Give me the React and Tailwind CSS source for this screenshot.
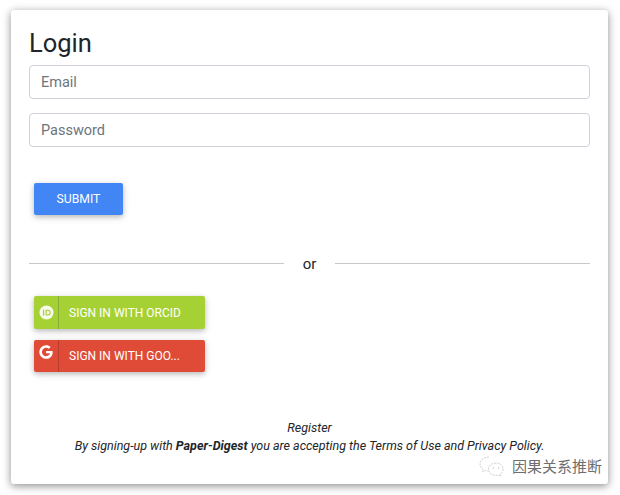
import React from 'react';

function OrcidIcon() {
  return (
    <svg width="15" height="15" viewBox="0 0 16 16">
      <circle cx="8" cy="8" r="7.5" fill="#fff" fillOpacity="0.9" />
      <rect x="4.2" y="5" width="1.3" height="6.2" fill="#a6ce39" />
      <path d="M7 5h2.4a3.1 3.1 0 0 1 0 6.2H7z M8.2 6.1v4h1.1a2 2 0 0 0 0-4z" fill="#a6ce39" fillRule="evenodd" />
    </svg>
  );
}

function GoogleIcon() {
  return (
    <svg width="14" height="14" viewBox="0 0 488 512" fill="#fff">
      <path d="M488 261.8C488 403.3 391.1 504 248 504 110.8 504 0 393.2 0 256S110.8 8 248 8c66.8 0 123 24.5 166.3 64.9l-67.5 64.9C258.5 52.6 94.3 116.6 94.3 256c0 86.5 69.1 156.6 153.7 156.6 98.2 0 135-70.4 140.8-106.9H248v-85.3h236.1c2.3 12.7 3.9 24.9 3.9 41.4z" />
    </svg>
  );
}

function WechatIcon() {
  return (
    <svg width="30" height="24" viewBox="0 0 28 24" fill="none" stroke="#c4c4c4" strokeWidth="0.8" strokeDasharray="2 1">
      <path d="M11 3C6 3 2 6.2 2 10c0 2.2 1.3 4 3.2 5.3L4.4 18l3-1.6c1 .3 2 .5 3 .5" />
      <path d="M18 9c-4.2 0-7.5 2.8-7.5 6.2s3.3 6.2 7.5 6.2c.9 0 1.7-.1 2.5-.4l2.4 1.4-.6-2.3c1.7-1.2 2.9-2.9 2.9-4.9C25.2 11.8 22.2 9 18 9z" />
      <circle cx="15.5" cy="14" r="0.7" fill="#c4c4c4" stroke="none" />
      <circle cx="20.5" cy="14" r="0.7" fill="#c4c4c4" stroke="none" />
    </svg>
  );
}

function SocialButton({ bg, line, icon, label, iconTop, labelTop, height }) {
  return (
    <button className={`flex w-[171px] items-stretch rounded-[2px] text-white shadow-[0_2px_5px_rgba(0,0,0,0.2),0_2px_10px_rgba(0,0,0,0.1)] ${height} ${bg}`}>
      <span className={`flex w-[25px] shrink-0 justify-center border-r ${line} ${iconTop}`}>{icon}</span>
      <span className={`self-center pl-[10px] text-[12px] ${labelTop}`}>{label}</span>
    </button>
  );
}

export default function App() {
  return (
    <div className="h-[495px] w-[620px] overflow-hidden bg-white pl-[11px] pt-[10px] font-['Roboto',sans-serif] text-[#212529]">
      <div className="relative flex h-[474px] w-[597px] flex-col rounded-[3px] bg-white px-[18px] pt-[17px] shadow-[0_2px_8px_rgba(0,0,0,0.45)]">
        <h1 className="text-[25.5px] leading-[32px]">Login</h1>

        <form className="mt-[6px] flex flex-col gap-[14px]" onSubmit={(e) => e.preventDefault()}>
          <input
            className="h-[34px] w-[561px] rounded-[4px] border border-[#ced4da] px-[11px] text-[14.5px] outline-none placeholder:text-[#6c757d]"
            placeholder="Email"
            type="email"
          />
          <input
            className="h-[34px] w-[561px] rounded-[4px] border border-[#ced4da] px-[11px] text-[14.5px] outline-none placeholder:text-[#6c757d]"
            placeholder="Password"
            type="password"
          />
          <button className="ml-[5px] mt-[22px] h-[32px] w-[89px] rounded-[2px] bg-[#4285f4] text-[12.2px] text-white shadow-[0_2px_5px_rgba(0,0,0,0.2),0_2px_10px_rgba(0,0,0,0.1)]">
            SUBMIT
          </button>
        </form>

        <div className="mt-[38px] flex items-center">
          <div className="h-px grow bg-[#c8c8c8]"></div>
          <span className="w-[51px] pt-px text-center text-[15px] leading-[20px]">or</span>
          <div className="h-px grow bg-[#c8c8c8]"></div>
        </div>

        <div className="ml-[5px] mt-[22px] flex flex-col gap-[11px]">
          <SocialButton
            bg="bg-[#a6d135]"
            line="border-[#8aab35]"
            height="h-[33px]"
            icon={<OrcidIcon />}
            iconTop="pt-[9px]"
            labelTop="pt-px"
            label="SIGN IN WITH ORCID"
          />
          <SocialButton
            bg="bg-[#e04b37]"
            line="border-[#b63d2d]"
            height="h-[32px]"
            icon={<GoogleIcon />}
            iconTop="pt-[5px]"
            labelTop="pt-0"
            label="SIGN IN WITH GOO..."
          />
        </div>

        <div className="mt-[47px] text-center text-[12.5px] italic leading-[18px]">
          <p>Register</p>
          <p>
            By signing-up with <b>Paper-Digest</b> you are accepting the Terms of Use and Privacy Policy.
          </p>
        </div>

        <div className="absolute right-[6px] top-[444px] flex items-center gap-[5px] font-['Noto_Sans_CJK_SC',sans-serif] text-[15px] text-[#6e6e6e]">
          <WechatIcon />
          <span>因果关系推断</span>
        </div>
      </div>
    </div>
  );
}
